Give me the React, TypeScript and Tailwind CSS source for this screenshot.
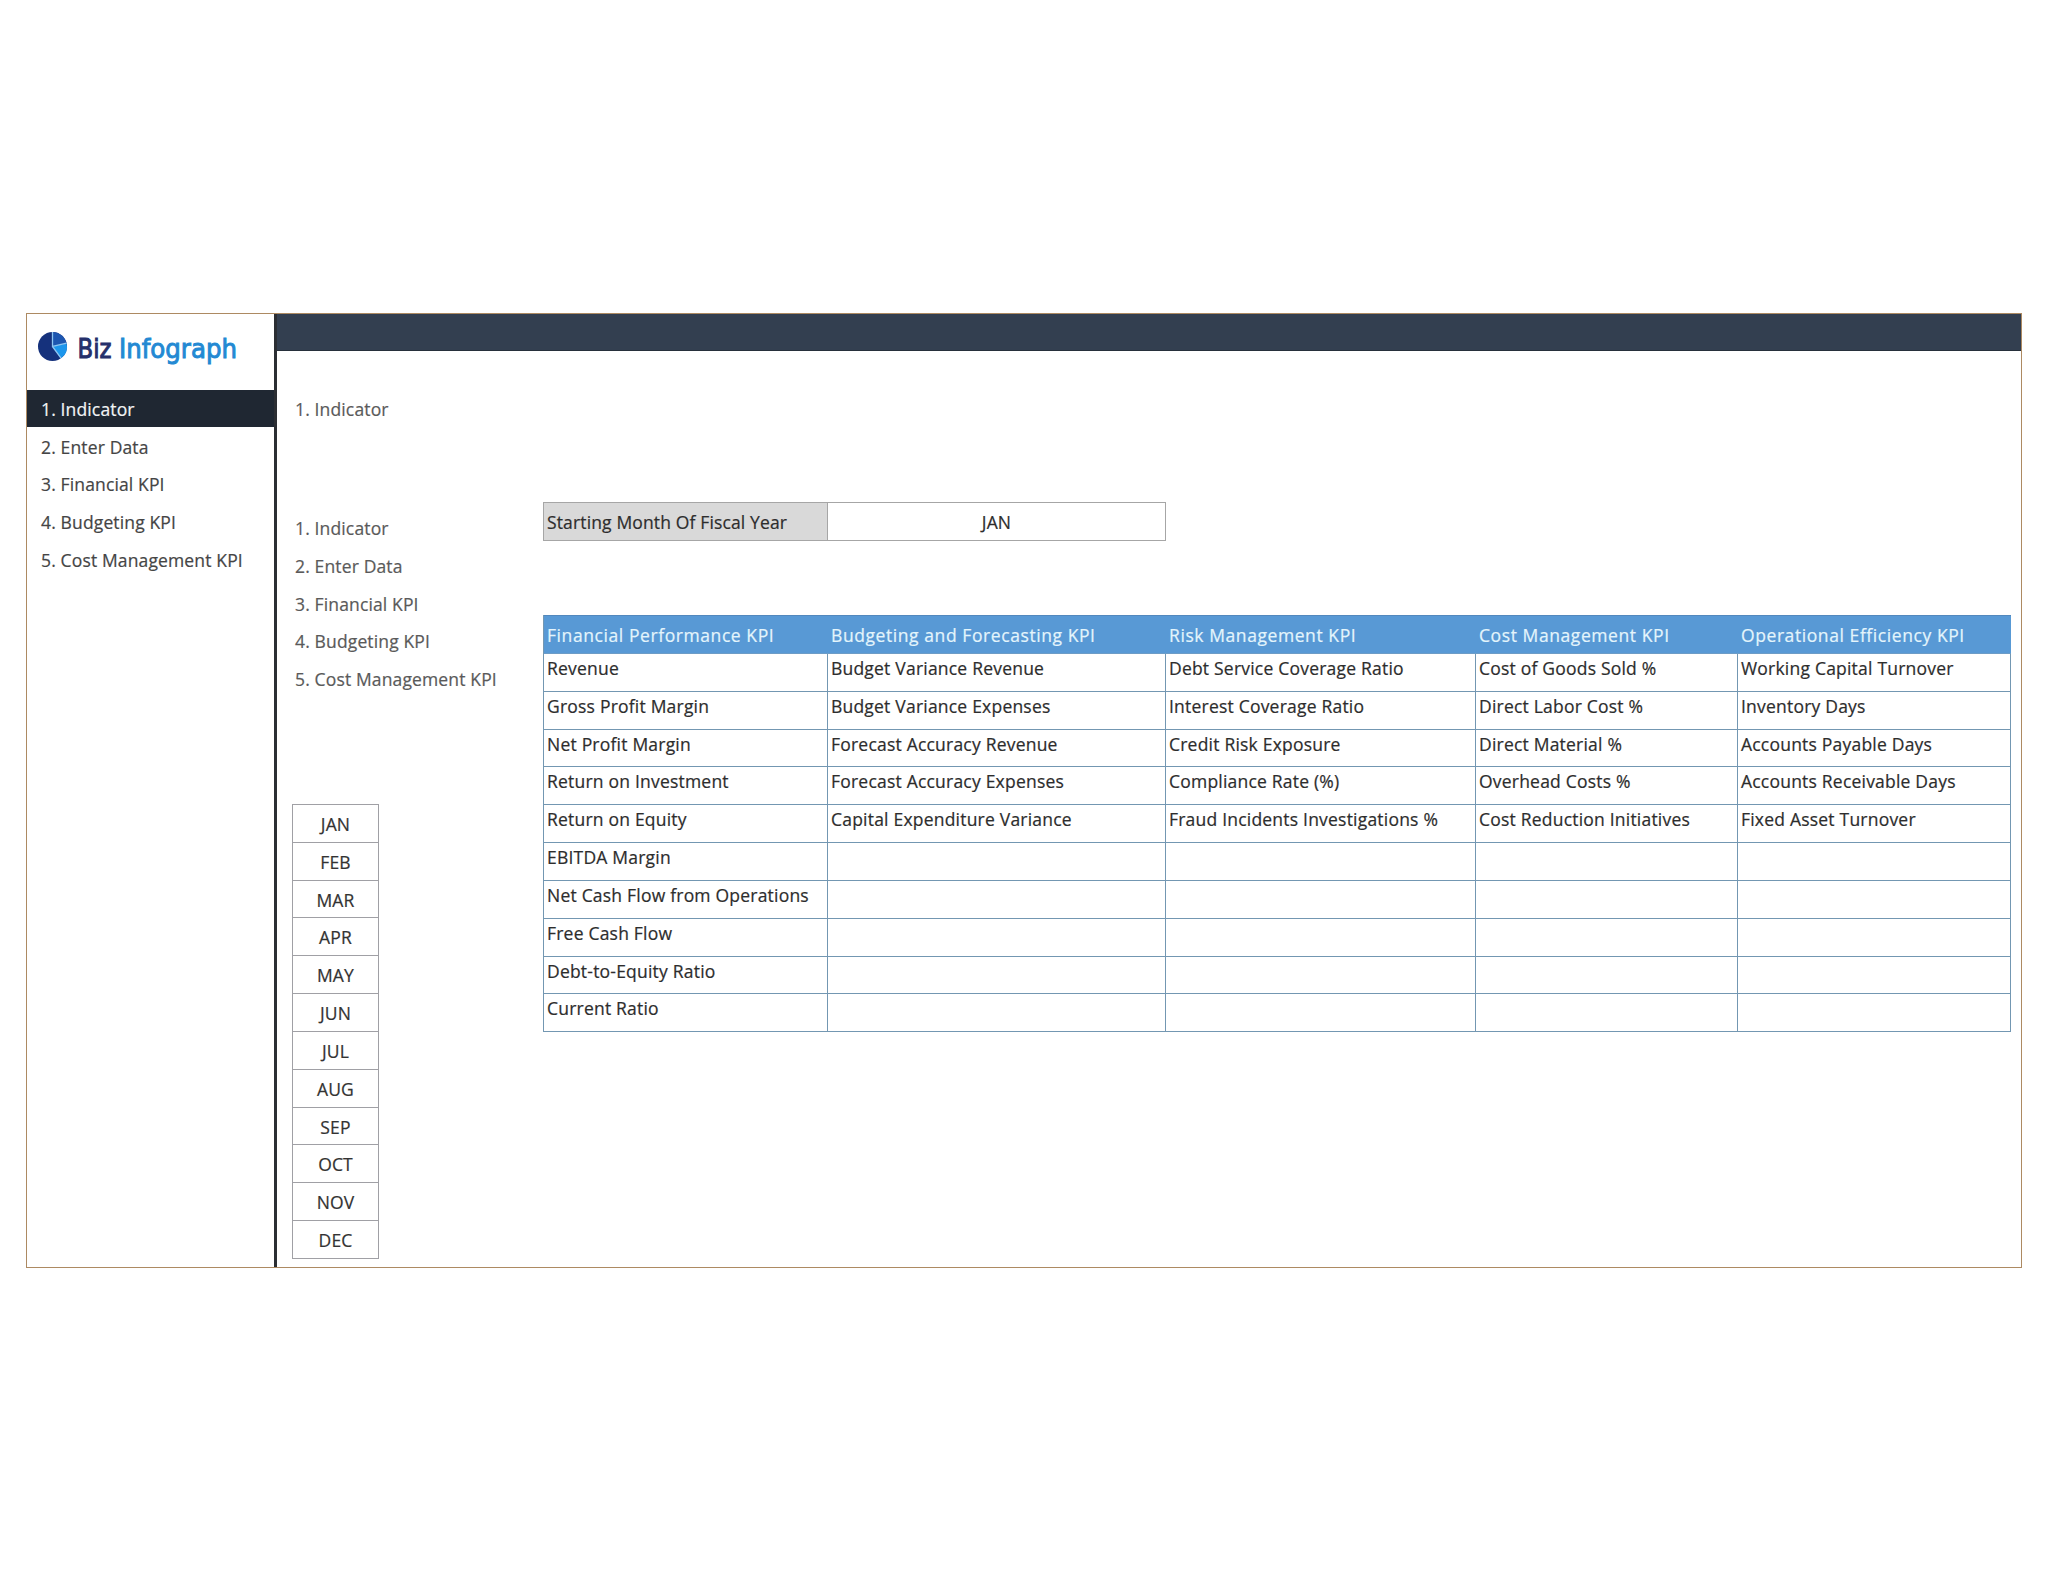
const NAV_ITEMS = [
  '1. Indicator',
  '2. Enter Data',
  '3. Financial KPI',
  '4. Budgeting KPI',
  '5. Cost Management KPI',
];

const MONTHS = ['JAN', 'FEB', 'MAR', 'APR', 'MAY', 'JUN', 'JUL', 'AUG', 'SEP', 'OCT', 'NOV', 'DEC'];

interface KpiColumn {
  title: string;
  items: string[];
}

const KPI_COLUMNS: KpiColumn[] = [
  {
    title: 'Financial Performance KPI',
    items: [
      'Revenue',
      'Gross Profit Margin',
      'Net Profit Margin',
      'Return on Investment',
      'Return on Equity',
      'EBITDA Margin',
      'Net Cash Flow from Operations',
      'Free Cash Flow',
      'Debt-to-Equity Ratio',
      'Current Ratio',
    ],
  },
  {
    title: 'Budgeting and Forecasting KPI',
    items: [
      'Budget Variance Revenue',
      'Budget Variance Expenses',
      'Forecast Accuracy Revenue',
      'Forecast Accuracy Expenses',
      'Capital Expenditure Variance',
    ],
  },
  {
    title: 'Risk Management KPI',
    items: [
      'Debt Service Coverage Ratio',
      'Interest Coverage Ratio',
      'Credit Risk Exposure',
      'Compliance Rate (%)',
      'Fraud Incidents Investigations %',
    ],
  },
  {
    title: 'Cost Management KPI',
    items: [
      'Cost of Goods Sold %',
      'Direct Labor Cost %',
      'Direct Material %',
      'Overhead Costs %',
      'Cost Reduction Initiatives',
    ],
  },
  {
    title: 'Operational Efficiency KPI',
    items: [
      'Working Capital Turnover',
      'Inventory Days',
      'Accounts Payable Days',
      'Accounts Receivable Days',
      'Fixed Asset Turnover',
    ],
  },
];

const ROW_COUNT = 10;

function Logo() {
  return (
    <svg width="220" height="44" viewBox="0 0 220 44" className="block tracking-normal">
      <circle cx="19.5" cy="19.5" r="14.5" fill="#15317c" />
      <path d="M19.5 19.5 L33.6 16.2 A14.5 14.5 0 0 1 28 31.2 Z" fill="#1c96ec" />
      <path d="M19.5 19.5 L19.5 5 A14.5 14.5 0 0 1 33.6 16.2 Z" fill="#1d56b0" />
      <path d="M19.5 5 V19.5 L33.6 16.2 M19.5 19.5 L28 31.2" fill="none" stroke="#8ec6f2" strokeWidth="1.3" />
      <text
        x="44.5"
        y="31"
        textLength="34"
        lengthAdjust="spacingAndGlyphs"
        fill="#25306b"
        stroke="#25306b"
        strokeWidth="1"
        className="font-['DejaVu_Sans',sans-serif] text-[27px]"
      >
        Biz
      </text>
      <text
        x="86"
        y="31"
        textLength="118"
        lengthAdjust="spacingAndGlyphs"
        fill="#2389d3"
        stroke="#2389d3"
        strokeWidth="1"
        className="font-['DejaVu_Sans',sans-serif] text-[27px]"
      >
        Infograph
      </text>
    </svg>
  );
}

function Sidebar() {
  return (
    <aside className="w-[250px] shrink-0 border-r-3 border-[#2b2e33]">
      <div className="h-[76px] pl-[6px] pt-[13px]">
        <Logo />
      </div>
      <nav>
        {NAV_ITEMS.map((item, i) => (
          <div
            key={item}
            className={
              i === 0
                ? 'flex h-[37px] items-center bg-[#1f2732] pl-[14px] pt-[1px] text-[#f2f4f5]'
                : 'flex h-[37.7px] items-center pl-[14px] pt-[2px] text-[#454545]'
            }
          >
            {item}
          </div>
        ))}
      </nav>
    </aside>
  );
}

function KpiTable() {
  const rows = Array.from({ length: ROW_COUNT }, (_, i) => i);

  return (
    <div className="grid grid-cols-[285px_338px_310px_262px_273px]">
      {KPI_COLUMNS.map((col, c) => (
        <div key={col.title} className={c === 0 ? 'border-l border-[#7397b2]' : ''}>
          <div className="flex h-[38px] items-center border-t border-[#5288bd] bg-[#5899d5] pl-[3px] pt-[2px] tracking-[0.58px] text-[#e4f5fc]">
            {col.title}
          </div>
          <div className="border-t border-[#6d9cc6]">
            {rows.map((r) => (
              <div
                key={r}
                className="h-[37.83px] whitespace-nowrap border-b border-r border-[#7397b2] pl-[3px] leading-[29px] tracking-[0.21px]"
              >
                {col.items[r]}
              </div>
            ))}
          </div>
        </div>
      ))}
    </div>
  );
}

export default function App() {
  return (
    <div className="min-h-[1582px] bg-white pl-[26px] pt-[313px] font-['Open_Sans',sans-serif] text-[17.5px] tracking-[0.14px] text-[#2d2d2d] [-webkit-text-stroke:0.2px]">
      <div className="flex h-[955px] w-[1996px] border border-[#ad8a62]">
        <Sidebar />
        <main className="flex-1">
          <div className="h-[37px] border-b border-[#27303b] bg-[#333f50]" />
          <div className="flex">
            {/* Contents list and month lookup */}
            <div className="w-[266px] shrink-0 pl-[15px] pt-[39px] text-[#5a5a5a]">
              <div className="h-[38px] pl-[3px] leading-[38px]">{NAV_ITEMS[0]}</div>
              <div className="pl-[3px] pt-[81px]">
                {NAV_ITEMS.map((item) => (
                  <div key={item} className="h-[37.8px] leading-[38px]">
                    {item}
                  </div>
                ))}
              </div>
              <div className="mt-[106px] w-[87px] border-t border-[#a0a0a5] text-[#333333]">
                {MONTHS.map((month) => (
                  <div
                    key={month}
                    className="h-[37.83px] border-x border-b border-[#a0a0a5] text-center leading-[39px]"
                  >
                    {month}
                  </div>
                ))}
              </div>
            </div>

            <div className="pt-[151px]">
              <div className="flex h-[39px] w-[623px] border border-[#a6a6a6]">
                <div className="flex w-[284px] items-center border-r border-[#a6a6a6] bg-[#d9d9d9] pl-[3px] pt-[2px]">
                  Starting Month Of Fiscal Year
                </div>
                <div className="flex flex-1 items-center justify-center pt-[2px]">JAN</div>
              </div>
              <div className="pt-[74px]">
                <KpiTable />
              </div>
            </div>
          </div>
        </main>
      </div>
    </div>
  );
}
